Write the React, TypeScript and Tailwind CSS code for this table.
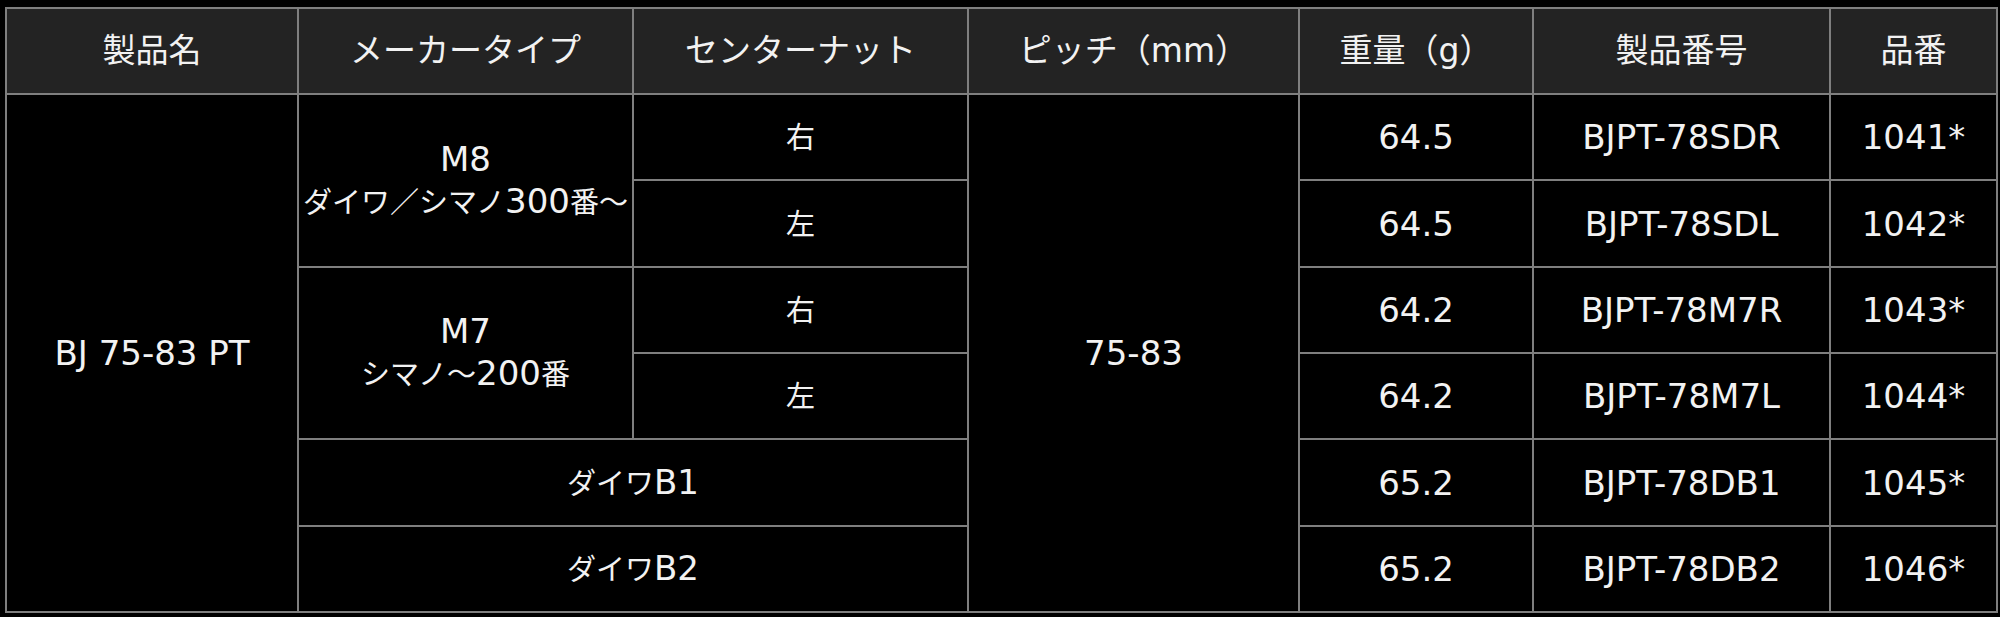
const font = '"DejaVu Sans", "Noto Sans CJK JP", sans-serif';

type Cell = {
  text: string[];
  col: string;
  row: string;
  head?: boolean;
};

const cells: Cell[] = [
  { text: ['製品名'], col: 'col-start-1', row: 'row-start-1', head: true },
  { text: ['メーカータイプ'], col: 'col-start-2', row: 'row-start-1', head: true },
  { text: ['センターナット'], col: 'col-start-3', row: 'row-start-1', head: true },
  { text: ['ピッチ（mm）'], col: 'col-start-4', row: 'row-start-1', head: true },
  { text: ['重量（g）'], col: 'col-start-5', row: 'row-start-1', head: true },
  { text: ['製品番号'], col: 'col-start-6', row: 'row-start-1', head: true },
  { text: ['品番'], col: 'col-start-7', row: 'row-start-1', head: true },

  { text: ['BJ 75-83 PT'], col: 'col-start-1', row: 'row-start-2 row-span-6' },
  { text: ['M8', 'ダイワ／シマノ300番～'], col: 'col-start-2', row: 'row-start-2 row-span-2' },
  { text: ['M7', 'シマノ～200番'], col: 'col-start-2', row: 'row-start-4 row-span-2' },
  { text: ['ダイワB1'], col: 'col-start-2 col-span-2', row: 'row-start-6' },
  { text: ['ダイワB2'], col: 'col-start-2 col-span-2', row: 'row-start-7' },
  { text: ['右'], col: 'col-start-3', row: 'row-start-2' },
  { text: ['左'], col: 'col-start-3', row: 'row-start-3' },
  { text: ['右'], col: 'col-start-3', row: 'row-start-4' },
  { text: ['左'], col: 'col-start-3', row: 'row-start-5' },
  { text: ['75-83'], col: 'col-start-4', row: 'row-start-2 row-span-6' },

  { text: ['64.5'], col: 'col-start-5', row: 'row-start-2' },
  { text: ['64.5'], col: 'col-start-5', row: 'row-start-3' },
  { text: ['64.2'], col: 'col-start-5', row: 'row-start-4' },
  { text: ['64.2'], col: 'col-start-5', row: 'row-start-5' },
  { text: ['65.2'], col: 'col-start-5', row: 'row-start-6' },
  { text: ['65.2'], col: 'col-start-5', row: 'row-start-7' },

  { text: ['BJPT-78SDR'], col: 'col-start-6', row: 'row-start-2' },
  { text: ['BJPT-78SDL'], col: 'col-start-6', row: 'row-start-3' },
  { text: ['BJPT-78M7R'], col: 'col-start-6', row: 'row-start-4' },
  { text: ['BJPT-78M7L'], col: 'col-start-6', row: 'row-start-5' },
  { text: ['BJPT-78DB1'], col: 'col-start-6', row: 'row-start-6' },
  { text: ['BJPT-78DB2'], col: 'col-start-6', row: 'row-start-7' },

  { text: ['1041*'], col: 'col-start-7', row: 'row-start-2' },
  { text: ['1042*'], col: 'col-start-7', row: 'row-start-3' },
  { text: ['1043*'], col: 'col-start-7', row: 'row-start-4' },
  { text: ['1044*'], col: 'col-start-7', row: 'row-start-5' },
  { text: ['1045*'], col: 'col-start-7', row: 'row-start-6' },
  { text: ['1046*'], col: 'col-start-7', row: 'row-start-7' },
];

// body text: kana/kanji set a little smaller than the latin, like the original font
function Runs({ line }: { line: string }) {
  const parts = line.match(/[\u3000-\u9fff\uff00-\uffef]+|[^\u3000-\u9fff\uff00-\uffef]+/g) ?? [];
  return (
    <span>
      {parts.map((p, i) =>
        /[\u3000-\u9fff\uff00-\uffef]/.test(p) ? (
          <span key={i} className="text-[29px]">
            {p}
          </span>
        ) : (
          <span key={i}>{p}</span>
        )
      )}
    </span>
  );
}

export default function App() {
  return (
    <div className="min-h-[617px] w-[2000px] bg-black pl-[5px] pt-[7px]" style={{ fontFamily: font }}>
      <div className="grid w-fit grid-cols-[290px_333px_333px_329px_232px_295px_165px] grid-rows-[84px_84px_85px_84px_84px_85px_84px] gap-[2px] bg-[#7f7f7f] p-[2px]">
        {cells.map((c, i) =>
          c.head ? (
            <div
              key={i}
              className={`${c.col} ${c.row} flex items-center justify-center bg-[#232323] text-[33px] leading-[42px] text-[#f2f2f2]`}
            >
              {c.text[0]}
            </div>
          ) : (
            <div
              key={i}
              className={`${c.col} ${c.row} flex flex-col items-center justify-center bg-black text-center text-[34px] leading-[42px] text-[#f2f2f2]`}
            >
              {c.text.map((t) => (
                <Runs key={t} line={t} />
              ))}
            </div>
          )
        )}
      </div>
    </div>
  );
}
